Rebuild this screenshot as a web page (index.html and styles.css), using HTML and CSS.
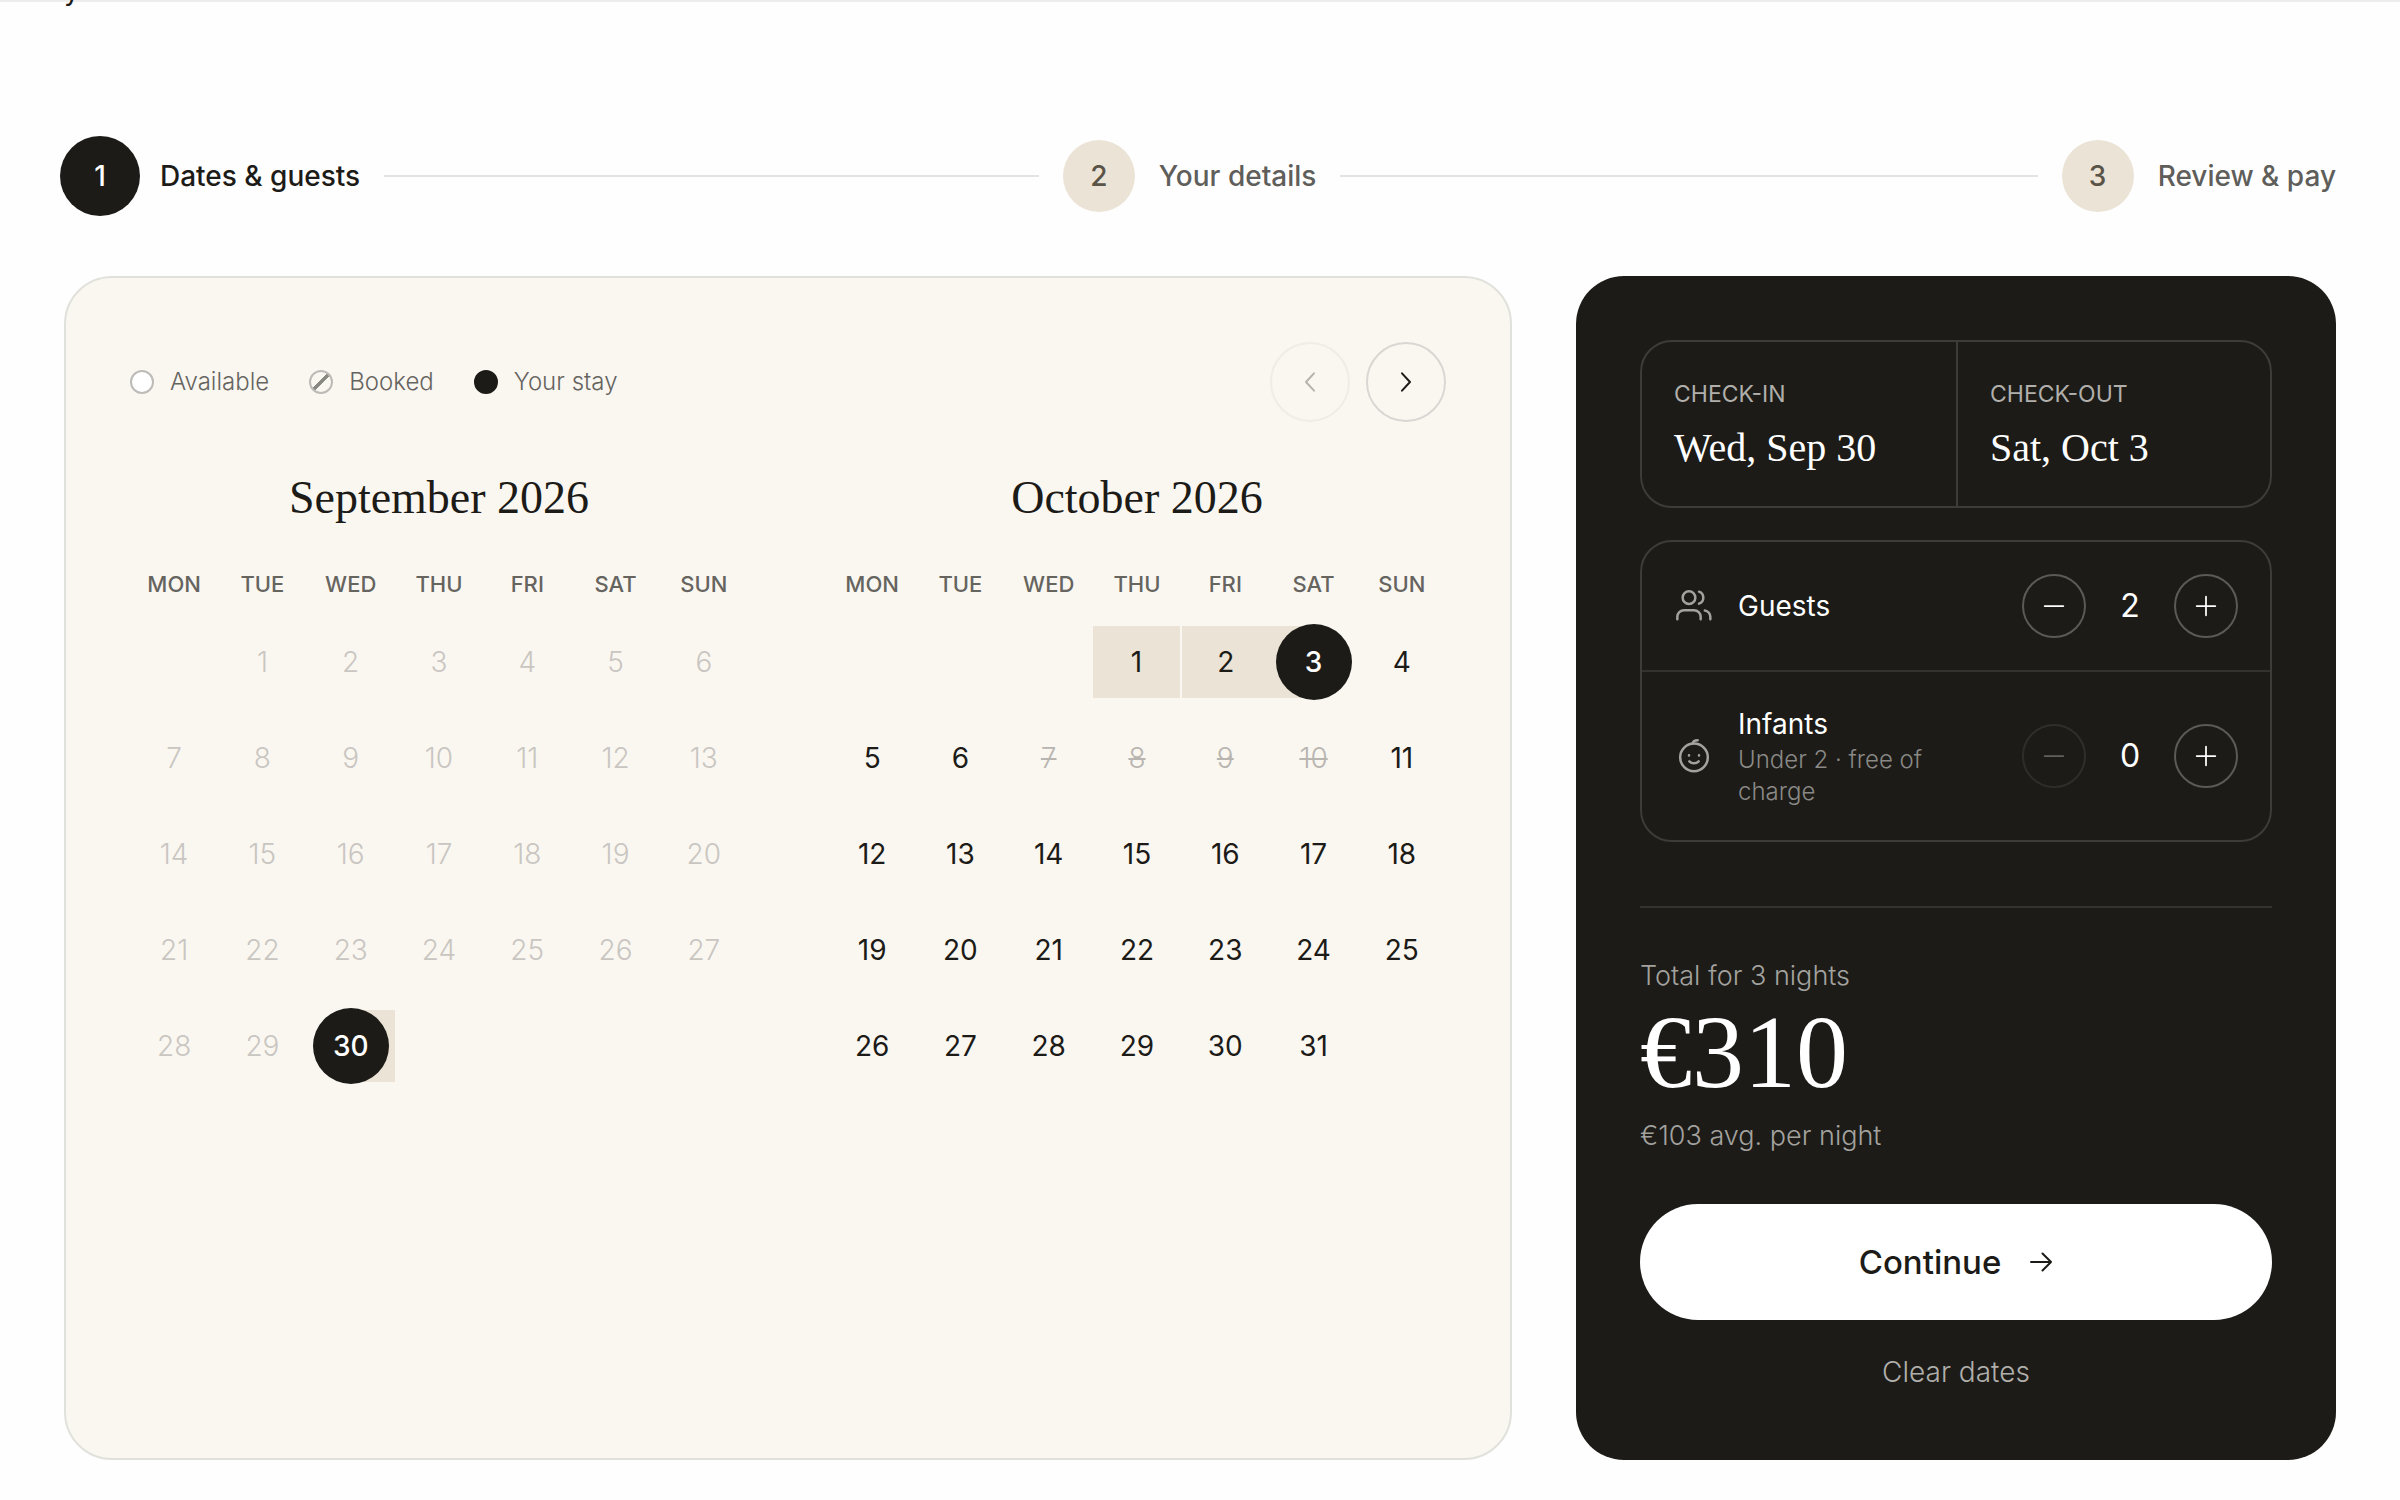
FILE: index.html
```html
<!DOCTYPE html>
<html lang="en">

<head>
    <meta charset="UTF-8">
    <meta name="viewport" content="width=device-width, initial-scale=1.0">
    <title>Book your stay</title>
    <link rel="stylesheet" href="styles.css">
</head>

<body>
    <header class="topbar"><span>y</span></header>

    <main class="booking">
        <ol class="steps">
            <li class="step active">
                <span class="step-number">1</span>
                <span class="step-label">Dates &amp; guests</span>
            </li>
            <li class="step">
                <span class="step-number">2</span>
                <span class="step-label">Your details</span>
            </li>
            <li class="step">
                <span class="step-number">3</span>
                <span class="step-label">Review &amp; pay</span>
            </li>
        </ol>

        <div class="panels">
            <section class="calendar">
                <div class="calendar-top">
                    <ul class="legend">
                        <li><span class="dot"></span>Available</li>
                        <li><span class="dot booked"></span>Booked</li>
                        <li><span class="dot stay"></span>Your stay</li>
                    </ul>
                    <div class="calendar-nav">
                        <button type="button" class="round" aria-label="Previous month" disabled>
                            <svg viewBox="0 0 24 24"><path d="M15 5.500 9 12l6 6.500" /></svg>
                        </button>
                        <button type="button" class="round" aria-label="Next month">
                            <svg viewBox="0 0 24 24"><path d="M9 5.500 15 12l-6 6.500" /></svg>
                        </button>
                    </div>
                </div>
                <div class="months" id="months"></div>
            </section>

            <aside class="summary">
                <dl class="dates">
                    <div>
                        <dt>CHECK-IN</dt>
                        <dd>Wed, Sep 30</dd>
                    </div>
                    <div>
                        <dt>CHECK-OUT</dt>
                        <dd>Sat, Oct 3</dd>
                    </div>
                </dl>

                <div class="people">
                    <div class="person">
                        <svg class="person-icon" viewBox="0 0 24 24">
                            <circle cx="9" cy="7" r="3.8" />
                            <path d="M15 3.4a3.8 3.8 0 0 1 0 7.2" />
                            <path d="M2 20v-1.500a4 4 0 0 1 4-4h6a4 4 0 0 1 4 4v1.500" />
                            <path d="M18.500 14.700a4 4 0 0 1 3.300 3.800v1.500" />
                        </svg>
                        <div class="person-text">
                            <div class="person-name">Guests</div>
                        </div>
                        <div class="counter">
                            <button type="button" class="round" aria-label="Fewer guests">
                                <svg viewBox="0 0 24 24"><path d="M4 12h16" /></svg>
                            </button>
                            <output>2</output>
                            <button type="button" class="round" aria-label="More guests">
                                <svg viewBox="0 0 24 24"><path d="M4 12h16M12 4v16" /></svg>
                            </button>
                        </div>
                    </div>
                    <div class="person">
                        <svg class="person-icon" viewBox="0 0 24 24">
                            <circle cx="12" cy="12.800" r="8.300" />
                            <path d="M11.200 4.500c.2-1.200 1.200-2 3-2" />
                            <path d="M9 11.600v.1M15 11.600v.1" />
                            <path d="M9.200 15.200c1.500 1.500 4.100 1.500 5.600 0" />
                        </svg>
                        <div class="person-text">
                            <div class="person-name">Infants</div>
                            <div class="person-note">Under 2 · free of charge</div>
                        </div>
                        <div class="counter">
                            <button type="button" class="round" aria-label="Fewer infants" disabled>
                                <svg viewBox="0 0 24 24"><path d="M4 12h16" /></svg>
                            </button>
                            <output>0</output>
                            <button type="button" class="round" aria-label="More infants">
                                <svg viewBox="0 0 24 24"><path d="M4 12h16M12 4v16" /></svg>
                            </button>
                        </div>
                    </div>
                </div>

                <div class="total">
                    <p>Total for 3 nights</p>
                    <p class="price">€310</p>
                    <p>€103 avg. per night</p>
                </div>

                <button type="button" class="continue">
                    Continue
                    <svg viewBox="0 0 24 24"><path d="M2 12h20M13.500 3.500 22 12l-8.500 8.500" /></svg>
                </button>
                <button type="button" class="clear">Clear dates</button>
            </aside>
        </div>
    </main>

    <script>
        var week_days = ["MON", "TUE", "WED", "THU", "FRI", "SAT", "SUN"];
        var month_name = ["January", "February", "March", "April", "May", "June", "July", "August", "September", "October", "November", "December"];
        var holder = document.getElementById("months");

        // same format for all: year * 10000 + month * 100 + day
        var first_open = 20260930;
        var check_in = 20260930;
        var check_out = 20261003;
        var booked = [20261007, 20261008, 20261009, 20261010];

        function dayClass(key) {
            if (key == check_in) return "check-in";
            if (key == check_out) return "check-out";
            if (key > check_in && key < check_out) return "in-range";
            if (booked.includes(key)) return "booked-day";
            if (key < first_open) return "past";
            return "";
        }

        function drawMonth(month, year) {
            var total = new Date(year, month + 1, 0).getDate();
            var empty = (new Date(year, month, 1).getDay() + 6) % 7;
            var str = "<table class='month'><caption>" + month_name[month] + " " + year + "</caption><thead><tr>";
            for (var i = 0; i < 7; i++) {
                str += "<th scope='col'>" + week_days[i] + "</th>";
            }
            str += "</tr></thead><tbody><tr>";
            for (var i = 0; i < empty; i++) {
                str += "<td></td>";
            }
            for (var day = 1; day <= total; day++) {
                if (day > 1 && (day + empty - 1) % 7 == 0) {
                    str += "</tr><tr>";
                }
                var name = dayClass(year * 10000 + (month + 1) * 100 + day);
                var off = name == "past" || name == "booked-day" ? " disabled" : "";
                str += "<td class='" + name + "'><button type='button'" + off + "><span>" + day + "</span></button></td>";
            }
            return str + "</tr></tbody></table>";
        }

        holder.innerHTML = drawMonth(8, 2026) + drawMonth(9, 2026);
    </script>
</body>

</html>
```
FILE: styles.css
```css
* {
    padding: 0;
    margin: 0;
    box-sizing: border-box;
}

body {
    background: #fefefe;
    color: #1c1b17;
    font-family: Inter, "Liberation Sans", sans-serif;
    font-size: 28px;
    font-weight: 300;
    line-height: 40px;
}

ol,
ul {
    list-style: none;
}

button {
    border: none;
    background: none;
    color: inherit;
    font: inherit;
    cursor: pointer;
}

svg {
    fill: none;
    stroke: currentColor;
    stroke-width: 1.5;
    stroke-linecap: round;
    stroke-linejoin: round;
}

.topbar {
    height: 40px;
    margin-top: -38px;
    padding: 0 64px;
    border-bottom: 2px solid #ededed;
    font-weight: 400;
    line-height: 56px;
}

.booking {
    padding: 134px 64px 40px;
}

/* steps */
.steps {
    display: flex;
    margin-bottom: 60px;
}

.step {
    display: flex;
    align-items: center;
    gap: 24px;
    height: 80px;
    color: #5f5e5b;
    font-weight: 500;
}

.step:not(:last-child) {
    flex: 1;
}

.step:not(:last-child)::after {
    content: "";
    flex: 1;
    height: 2px;
    margin-right: 24px;
    background: #e4e4e3;
}

.step-number {
    display: grid;
    place-items: center;
    width: 72px;
    height: 72px;
    border-radius: 50%;
    background: #ebe3d5;
    color: #5a5347;
}

.active {
    color: #1c1b17;
}

.active .step-number {
    width: 80px;
    height: 80px;
    margin: 0 -4px;
    background: #1c1b17;
    color: #fff;
}

.panels {
    display: grid;
    grid-template-columns: 1fr 760px;
    gap: 64px;
}

/* calendar */
.calendar {
    padding: 64px;
    border: 2px solid #e1e1dc;
    border-radius: 48px;
    background: #faf7f1;
}

.calendar-top,
.calendar-nav,
.legend,
.legend li {
    display: flex;
    align-items: center;
}

.calendar-top {
    justify-content: space-between;
    margin-bottom: 48px;
}

.calendar-nav {
    gap: 16px;
}

.legend {
    gap: 40px;
    color: #66645f;
    font-size: 24px;
}

.legend li {
    gap: 16px;
}

.dot {
    width: 24px;
    height: 24px;
    border: 2px solid #bdbbb7;
    border-radius: 50%;
    background: #fff;
}

.dot.booked {
    background: linear-gradient(135deg, transparent 44%, #8b8984 44%, #8b8984 56%, transparent 56%);
}

.dot.stay {
    border-color: #1c1b17;
    background: #1c1b17;
}

.round {
    display: grid;
    place-items: center;
    width: 80px;
    height: 80px;
    border: 2px solid #d9d7d3;
    border-radius: 50%;
}

.round svg {
    width: 32px;
    height: 32px;
}

.round:disabled {
    opacity: 0.3;
}

.months {
    display: grid;
    grid-template-columns: 1fr 1fr;
    align-items: start;
    gap: 80px;
}

.month {
    width: 100%;
    table-layout: fixed;
    border-collapse: collapse;
    text-align: center;
}

.month caption {
    padding-bottom: 28px;
    font-family: "Liberation Serif", serif;
    font-size: 46px;
    font-weight: 400;
    line-height: 56px;
}

.month th {
    height: 60px;
    color: #66645f;
    font-size: 22px;
    font-weight: 500;
}

.month td {
    padding: 12px 0;
}

.month td button {
    display: grid;
    place-items: center;
    width: 100%;
    height: 72px;
    font-weight: 400;
}

.month .past button {
    color: #c9c6c1;
    font-weight: 300;
}

.month .booked-day button {
    color: #b8b5b0;
    font-weight: 300;
    text-decoration: line-through;
}

.month .in-range button {
    background: #ebe3d5;
}

.month .in-range + .in-range {
    border-left: 2px solid #faf7f1;
}

.month .check-in button {
    background: linear-gradient(to right, transparent 50%, #ebe3d5 50%);
}

.month .check-out button {
    background: linear-gradient(to left, transparent 50%, #ebe3d5 50%);
}

.check-in span,
.check-out span {
    width: 76px;
    margin: -2px;
    border-radius: 50%;
    background: #1c1b17;
    color: #fff;
    font-weight: 500;
    line-height: 76px;
}

/* summary */
.summary {
    display: flex;
    flex-direction: column;
    padding: 64px;
    border-radius: 48px;
    background: #1c1b17;
    color: #fff;
}

.dates,
.people {
    margin-bottom: 32px;
    border: 2px solid #3d3c38;
    border-radius: 32px;
}

.dates {
    display: grid;
    grid-template-columns: 1fr 1fr;
}

.dates div {
    padding: 32px;
}

.dates div + div {
    border-left: 2px solid #3d3c38;
}

.dates dt {
    margin-bottom: 8px;
    color: #b0afab;
    font-size: 23px;
    font-weight: 400;
    line-height: 40px;
}

.dates dd {
    font-family: "Liberation Serif", serif;
    font-size: 40px;
    font-weight: 400;
    line-height: 52px;
}

.people {
    margin-bottom: 64px;
}

.person {
    display: flex;
    align-items: center;
    gap: 24px;
    padding: 32px;
}

.person + .person {
    border-top: 2px solid #33322e;
}

.person-icon {
    flex: none;
    width: 40px;
    height: 40px;
    color: #a3a29f;
}

.person-text {
    flex: 1;
}

.person-name {
    font-weight: 400;
}

.person-note {
    color: #8a8986;
    font-size: 24px;
    line-height: 32px;
}

.counter {
    display: flex;
    align-items: center;
    gap: 16px;
}

.counter output {
    width: 56px;
    font-size: 32px;
    font-weight: 400;
    text-align: center;
}

.counter .round {
    width: 64px;
    height: 64px;
    border-color: #5b5a57;
}

.counter svg {
    width: 28px;
    height: 28px;
}

.total {
    margin-bottom: 48px;
    padding-top: 48px;
    border-top: 2px solid #33322e;
    color: #a3a29f;
    font-size: 27px;
}

.total .price {
    margin: 8px 0 16px;
    color: #fff;
    font-family: "Liberation Serif", serif;
    font-size: 104px;
    font-weight: 400;
    line-height: 96px;
}

.continue {
    display: flex;
    align-items: center;
    justify-content: center;
    gap: 28px;
    height: 116px;
    margin-bottom: 28px;
    border-radius: 58px;
    background: #fff;
    color: #1c1b17;
    font-size: 33px;
    font-weight: 500;
}

.continue svg {
    width: 24px;
    height: 24px;
    stroke-width: 2;
}

.clear {
    height: 48px;
    color: #b0afab;
}
```
